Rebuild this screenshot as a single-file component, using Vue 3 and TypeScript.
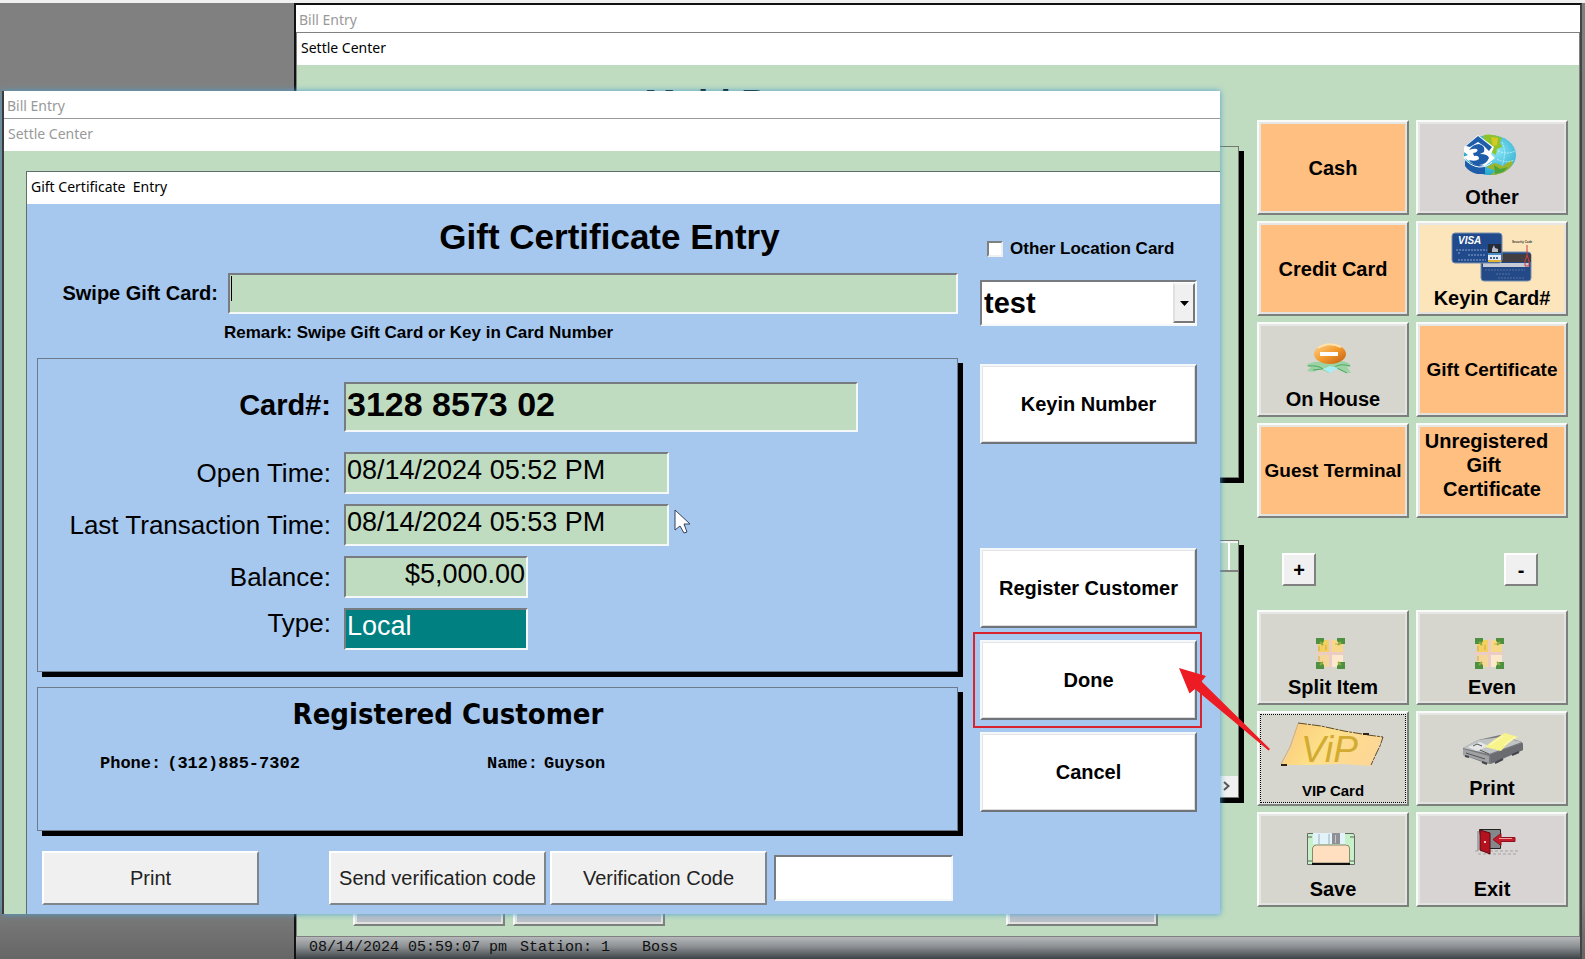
<script setup lang="ts">
import { ref } from 'vue'

interface PadButton {
  label: string
  icon?: string
  tone: string
  size?: string
}

interface CardField {
  id: string
  label: string
  value: string
  kind: string
}

const payButtons: PadButton[] = [
  { label: 'Cash', tone: 'orange' },
  { label: 'Other', icon: 'globe', tone: 'silver' },
  { label: 'Credit Card', tone: 'orange' },
  { label: 'Keyin Card#', icon: 'cards', tone: 'cream' },
  { label: 'On House', icon: 'house', tone: 'stone' },
  { label: 'Gift Certificate', tone: 'orange', size: 'medium' },
  { label: 'Guest Terminal', tone: 'orange', size: 'medium' },
  { label: 'Unregistered  \nGift   \nCertificate', tone: 'orange', size: 'multi' },
]

const actionButtons: PadButton[] = [
  { label: 'Split Item', icon: 'split', tone: 'stone' },
  { label: 'Even', icon: 'split', tone: 'stone' },
  { label: 'VIP Card', icon: 'vip', tone: 'stone', size: 'small' },
  { label: 'Print', icon: 'printer', tone: 'stone' },
  { label: 'Save', icon: 'floppy', tone: 'stone' },
  { label: 'Exit', icon: 'door', tone: 'silver' },
]

const fields: CardField[] = [
  { id: 'card-no', label: 'Card#:', value: '3128 8573 02', kind: 'number' },
  { id: 'open-time', label: 'Open Time:', value: '08/14/2024 05:52 PM', kind: 'time' },
  { id: 'last-time', label: 'Last Transaction Time:', value: '08/14/2024 05:53 PM', kind: 'time' },
  { id: 'balance', label: 'Balance:', value: '$5,000.00', kind: 'money' },
  { id: 'card-type', label: 'Type:', value: 'Local', kind: 'type' },
]

const entryTitle = 'Gift Certificate  Entry'
const swipe = ref('')
const otherLocation = ref(false)
const location = ref('test')
const verification = ref('')
</script>

<template>
  <div class="desktop">
    <section class="back">
      <div class="titlebar muted">Bill Entry</div>
      <div class="settle">
        <div class="titlebar tall">Settle Center</div>
        <div class="back-body">
          <div class="back-main">
            <h2>Multi Payment</h2>
            <div class="list list-one"></div>
            <div class="list list-two">
              <div class="list-head"><span></span></div>
              <div class="list-foot">
                <button type="button" aria-label="Scroll right">
                  <svg width="10" height="10" viewBox="0 0 10 10"><path d="M2 1l4.500 4L2 9" fill="none" stroke="#555" stroke-width="2" /></svg>
                </button>
              </div>
            </div>
            <div class="back-foot">
              <button type="button" class="pad silver" aria-label="Previous"></button>
              <button type="button" class="pad silver" aria-label="Next"></button>
              <button type="button" class="pad silver last" aria-label="More"></button>
            </div>
          </div>
          <div class="back-side">
            <div class="pad-grid">
              <button v-for="b in payButtons" :key="b.label" type="button" class="pad" :class="[b.tone, b.size, { iconic: b.icon }]">
                <svg v-if="b.icon === 'globe'" class="pad-icon" viewBox="0 0 148 61">
                  <defs>
                    <radialGradient id="sea" cx="0.6" cy="0.4" r="0.6">
                      <stop offset="0" stop-color="#8fe8f8" /><stop offset="1" stop-color="#25a8cc" />
                    </radialGradient>
                  </defs>
                  <ellipse cx="72" cy="33" rx="26" ry="20" fill="url(#sea)" />
                  <path d="M66 13q9-2 18 3l-2 4 2 5-5 2-1 6-5-3-2-8-6-6z" fill="#8fc32b" />
                  <path d="M73 15l7 1-1 7-4 1z" fill="#d5c928" />
                  <path d="M68 45l9-4 8 3 8-6 2 3c-4 8-12 12-23 12l6-4z" fill="#9cb52c" />
                  <path d="M76 43l6 4 8-2-5 5-8 2z" fill="#4ca53c" />
                  <path d="M84 20q5 10 0 24M80 29q9 4 17 0M79 37q8 5 17 1" fill="none" stroke="#b9f0fa" stroke-dasharray="2 1" />
                  <path d="M47 39l8 3 8-1 4-4v15l-8 0q-8-2-12-8z" fill="#1d5da9" />
                  <path d="M46 25L60 13 76 25 73 32 77 36 67 44 55 42 45 35 50 33 46 30z" fill="#fff" />
                  <path d="M48 24L60 14 74 25 71 29 66 24 60 20 52 25z" fill="#1d5da9" />
                  <path d="M51 28q4-6 10-6 7 2 5 8l-4 2q8 0 9 4-3 7-10 7-6 1-10-5 7 2 10-1 0-4-5-3l-1-3q6-1 4-4-3-1-8 1z" fill="#1d5da9" />
                  <path d="M46 36q6 8 15 9 9 0 13-5" fill="none" stroke="#fff" stroke-width="1" />
                </svg>
                <svg v-else-if="b.icon === 'cards'" class="pad-icon" viewBox="0 0 148 61">
                  <rect x="63" y="29" width="50" height="29" rx="3" fill="#234a86" stroke="#7890ae" />
                  <rect x="63" y="31" width="50" height="8" fill="#433e42" />
                  <rect x="65" y="40" width="46" height="4" fill="#c9cbd4" />
                  <path d="M67 47h40M78 51h14M80 55h26" stroke="#55709f" stroke-dasharray="2 1" />
                  <path d="M109 22v10l-2 6v5h4v-5l-2-6" fill="none" stroke="#c93d42" />
                  <rect x="34" y="10" width="50" height="30" rx="3" fill="#204a8b" stroke="#7890ae" />
                  <text x="40" y="21" class="visa">VISA</text>
                  <path d="M38 27h31M40 30h3M50 32h17M40 37h28" stroke="#8ba6cc" stroke-dasharray="2 1" />
                  <rect x="70" y="21" width="13" height="9" fill="#252b38" />
                  <path d="M74 29v-3l2-4 1 3 3 1v3z" fill="#b9bcc4" />
                  <rect x="70" y="30" width="13" height="9" fill="#e5eef8" />
                  <path d="M70 31h13" stroke="#4a90c4" stroke-width="2" /><path d="M70 38h13" stroke="#e2b437" stroke-width="2" />
                  <path d="M72 35h9" stroke="#446599" stroke-width="2" stroke-dasharray="2 1" />
                  <text x="94" y="20" class="code">Security Code</text>
                </svg>
                <svg v-else-if="b.icon === 'house'" class="pad-icon" viewBox="0 0 148 61">
                  <defs>
                    <linearGradient id="orb" x1="0" y1="0" x2="1" y2="1">
                      <stop offset="0" stop-color="#ffd48a" /><stop offset="0.500" stop-color="#f39a2e" /><stop offset="1" stop-color="#bd5c10" />
                    </linearGradient>
                  </defs>
                  <path d="M47 42q5-5 16-4l17-1q9 0 12 5l-4 1 4 6q-9 0-15-5l-7 5-9-4q-5 4-13 2l4-4z" fill="#9bd3a4" />
                  <path d="M49 42q10-1 15 3M91 42q-10-3-15 1M54 46l9-1M78 44l10 5" fill="none" stroke="#4fa863" />
                  <path d="M64 45l7-3 8 2-8 5z" fill="#a8edf4" />
                  <ellipse cx="71" cy="30" rx="16" ry="10" fill="url(#orb)" />
                  <path d="M59 24q11-7 23-1" fill="none" stroke="#ffe2ac" stroke-width="2" />
                  <rect x="61" y="28" width="18" height="4" fill="#fff" />
                </svg>
                <span>{{ b.label }}</span>
              </button>
            </div>
            <div class="steppers">
              <button type="button" class="mini">+</button>
              <button type="button" class="mini">-</button>
            </div>
            <div class="pad-grid">
              <button v-for="b in actionButtons" :key="b.label" type="button" class="pad iconic" :class="[b.tone, b.size]">
                <svg v-if="b.icon === 'split'" class="pad-icon" viewBox="0 0 148 61">
                  <rect x="59" y="28" width="11" height="12" fill="#f4cf62" /><rect x="73" y="28" width="11" height="12" fill="#f7d888" />
                  <rect x="59" y="43" width="11" height="12" fill="#f5d79c" /><rect x="73" y="43" width="11" height="12" fill="#fce9cb" />
                  <path d="M57 41.500h28M71.500 27v29" stroke="#f3c8c0" stroke-width="2" />
                  <path d="M60 34v5M67 33v5M60 44v5M76 32h6" stroke="#d2a747" />
                  <path d="M57 26h8v3l-2 3h-6zM78 26h8v6h-5l-3-3zM57 50h5l3 3v4h-8zM81 50h5v7h-8v-3z" fill="#4d9140" />
                  <path d="M61 30l3 3M82 30l-3 3M61 53l3-3M82 53l-3-3" stroke="#8fae3b" stroke-width="2" />
                </svg>
                <svg v-else-if="b.icon === 'vip'" class="pad-icon" viewBox="0 0 148 61">
                  <defs>
                    <linearGradient id="ticket" x1="0" y1="0" x2="1" y2="0.300">
                      <stop offset="0" stop-color="#fbc674" /><stop offset="0.500" stop-color="#fde08a" /><stop offset="1" stop-color="#fdd795" />
                    </linearGradient>
                  </defs>
                  <path d="M40 10l21 3 32 6 31 5-12 29-29-2-32 1-28 0 9-17z" fill="url(#ticket)" />
                  <path d="M39 10l23 3 23 5 24 4 15 2-3 9-3 6-6 13" fill="none" stroke="#5c4b2b" stroke-dasharray="9 1 3 1" />
                  <path d="M22 52h6M104 21h6" stroke="#2c2419" stroke-width="2" />
                  <path d="M39 11l-8 23-9 17" fill="none" stroke="#dcaa62" />
                  <text x="42" y="49" class="vip-text">ViP</text>
                </svg>
                <svg v-else-if="b.icon === 'printer'" class="pad-icon" viewBox="0 0 148 61">
                  <path d="M45 35l15-8 22-5 22 7 1 8-32 14-6-1-22-8z" fill="#777a7d" />
                  <path d="M45 35l15-8 23-3 21 5-33 12z" fill="#c1c4c5" />
                  <path d="M45 36l26 7v7l-26-8z" fill="#a0a2a5" />
                  <path d="M72 42l33-12v7l-32 13z" fill="#6a6c72" />
                  <path d="M50 34l12-5 9 4-12 5z" fill="#e6e6e6" />
                  <path d="M55 33l4-2 5 2M48 40l19 6M62 37l9 4" fill="none" stroke="#555" />
                  <path d="M47 43l4 1M64 49l5 2M77 50l8-4M94 42l7-3" stroke="#44464c" stroke-width="2" />
                  <path d="M67 34q12-10 20-14l13 4q-10 5-17 14z" fill="#f8f48c" />
                  <path d="M72 32l13-9M97 24l-11 8" stroke="#fffbc9" />
                </svg>
                <svg v-else-if="b.icon === 'floppy'" class="pad-icon" viewBox="0 0 148 61">
                  <path d="M48.500 19.500h46l1 2v29h-47z" fill="#c7f1c8" stroke="#626b63" />
                  <rect x="54" y="19" width="32" height="11" fill="#e2f4fa" />
                  <rect x="73" y="19" width="8" height="11" fill="#8f9196" /><path d="M76.500 21v8" stroke="#c5c7ca" />
                  <path d="M60 20v10M70 20v10" stroke="#9aaeb8" />
                  <path d="M53.500 49V34q1-3 4-3h29q4 0 4 3v15z" fill="#ffdfc0" stroke="#858a75" />
                  <path d="M53 50h38" stroke="#111" stroke-width="2" />
                  <path d="M49 23h4M91 23h4M49 47h4M91 47h4" stroke="#5a665c" />
                </svg>
                <svg v-else class="pad-icon" viewBox="0 0 148 61">
                  <path d="M57 37h44M60 40h38" stroke="#a5a1a1" stroke-dasharray="3 2" />
                  <path d="M61.500 15.500h21v19h-18z" fill="#85888b" stroke="#222" />
                  <path d="M60 17v20" stroke="#a6a6a8" stroke-width="2" />
                  <path d="M62 16l10 3v21l-10-4z" fill="#b51220" stroke="#5c0810" />
                  <circle cx="67" cy="28" r="1" fill="#fff" />
                  <path d="M75 25.500l8-6v4h14v4h-14v4z" fill="#c51c2c" stroke="#8f101c" />
                  <path d="M81 24.500h13" stroke="#f29a9f" />
                </svg>
                <span>{{ b.label }}</span>
              </button>
            </div>
          </div>
        </div>
      </div>
      <footer class="status"><span>08/14/2024 05:59:07 pm</span><span>Station: 1</span><span class="user">Boss</span></footer>
    </section>

    <section class="front">
      <div class="titlebar muted">Bill Entry</div>
      <div class="front-settle">
        <div class="titlebar tall muted">Settle Center</div>
        <div class="entry">
          <div class="titlebar tall">{{ entryTitle }}</div>
          <form class="form" @submit.prevent>
            <div class="form-left">
              <h1>Gift Certificate Entry</h1>
              <div class="swipe">
                <label for="swipe">Swipe Gift Card:</label>
                <div class="swipe-box">
                  <input id="swipe" v-model="swipe" class="sunken" type="text" />
                  <i class="caret"></i>
                </div>
              </div>
              <p class="remark">Remark: Swipe Gift Card or Key in Card Number</p>

              <div class="panel card-panel">
                <div v-for="f in fields" :key="f.id" class="field" :class="f.kind">
                  <label :for="f.id">{{ f.label }}</label>
                  <input :id="f.id" class="sunken" type="text" :value="f.value" readonly />
                  <svg v-if="f.id === 'last-time'" class="pointer" width="17" height="25" viewBox="0 0 17 25">
                    <path d="M1 1v20l5-4 4 7 3-1-3-8h6z" fill="#fff" stroke="#33415c" stroke-width="1" />
                  </svg>
                </div>
              </div>

              <div class="panel customer">
                <h3>Registered Customer</h3>
                <dl>
                  <div><dt>Phone:</dt><dd>(312)885-7302</dd></div>
                  <div><dt>Name:</dt><dd>Guyson</dd></div>
                </dl>
              </div>

              <div class="bottom">
                <button type="button" class="plain print">Print</button>
                <button type="button" class="plain">Send verification code</button>
                <button type="button" class="plain">Verification Code</button>
                <input v-model="verification" class="sunken code-box" type="text" aria-label="Verification code" />
              </div>
            </div>

            <div class="form-right">
              <label class="check"><input v-model="otherLocation" type="checkbox" />Other Location Card</label>
              <div class="combo">
                <select v-model="location" class="sunken" aria-label="Location">
                  <option>test</option>
                </select>
                <span class="drop"><svg width="9" height="5" viewBox="0 0 9 5"><path d="M0 0h9L4.500 5z" fill="#000" /></svg></span>
              </div>
              <button type="button" class="big keyin">Keyin Number</button>
              <button type="button" class="big">Register Customer</button>
              <div class="marked">
                <button type="button" class="big">Done</button>
                <svg class="arrow" width="94" height="86" viewBox="0 0 94 86">
                  <path d="M1 1L28 9 23.500 14.500 92 82 90.500 83.500 17 22 11.500 26.500z" fill="#ed1c24" />
                </svg>
              </div>
              <button type="button" class="big">Cancel</button>
            </div>
          </form>
        </div>
      </div>
    </section>
  </div>
</template>

<style>
html,
body {
  margin: 0;
  background: #808080;
}
</style>

<style scoped>
* {
  box-sizing: border-box;
}

.desktop {
  position: relative;
  min-height: 100vh;
  padding: 3px 3px 0 294px;
  background: linear-gradient(#f0f0f0 3px, transparent 3px), linear-gradient(#808080 0, #808080 900px, #666 959px);
  font-family: "Liberation Sans", Arial, sans-serif;
  color: #000;
}

button,
input,
select {
  font-family: inherit;
  color: inherit;
  margin: 0;
}

h1,
h2,
h3,
p,
dl,
dd {
  margin: 0;
}

.titlebar {
  display: flex;
  align-items: center;
  height: 27px;
  padding: 2px 4px 0 3px;
  background: #fff;
  font-family: "Noto Sans", "Open Sans", sans-serif;
  font-size: 14px;
  line-height: 20px;
  white-space: pre;
}

.titlebar.tall {
  height: 32px;
  padding: 0 4px 2px;
}

.titlebar.muted {
  color: #999;
}

/* settle window at the back */
.back {
  display: flex;
  flex-direction: column;
  min-height: calc(100vh - 3px);
  border: 2px solid #111;
  border-right-color: #444;
  border-bottom: 0;
  background: #fff;
}

.settle {
  flex: 1;
  display: flex;
  flex-direction: column;
  border: 1px solid #808080;
}

.back-body {
  flex: 1;
  display: flex;
  padding-right: 11px;
  background: #c0dcc0;
}

.back-main {
  flex: 1;
}

h2 {
  margin: 19px 0 22px;
  padding-left: 4px;
  font-size: 37px;
  line-height: 40px;
  text-align: center;
}

.list {
  margin-left: 10px;
  border: 1px solid #707870;
  box-shadow: 5px 5px 0 #000;
}

.list-one {
  height: 332px;
  margin-bottom: 62px;
}

.list-two {
  display: flex;
  flex-direction: column;
  justify-content: space-between;
  height: 258px;
}

.list-head {
  height: 31px;
  padding-right: 8px;
  border-top: 2px solid #f4f4f4;
  border-bottom: 2px solid #808080;
}

.list-head span {
  display: block;
  height: 100%;
  border-right: 2px solid #fff;
}

.list-foot {
  background: #f0f0f0;
}

.list-foot button {
  display: block;
  margin-left: auto;
  width: 22px;
  height: 21px;
  padding: 0;
  border: 0;
  background: #f0f0f0;
}

.back-foot {
  display: flex;
  gap: 8px;
  margin-top: 33px;
  padding: 0 81px 0 56px;
}

.back-foot .pad {
  width: 152px;
  background: #bcc0c8;
}

.back-foot .last {
  margin-left: auto;
}

.back-side {
  width: 311px;
  margin-left: 18px;
  padding-top: 55px;
}

.pad-grid {
  display: grid;
  grid-template-columns: 1fr 1fr;
  gap: 6px 7px;
}

.pad {
  display: flex;
  flex-direction: column;
  align-items: center;
  justify-content: center;
  height: 95px;
  padding: 0;
  border: 2px solid;
  border-color: #f8fbf8 #7c807c #7c807c #f8fbf8;
  box-shadow: inset 2px 2px 0 #e6e6e4, inset -2px -2px 0 #e2e2e0;
  font-size: 20px;
  font-weight: bold;
  line-height: 24px;
  white-space: pre;
}

.iconic {
  justify-content: flex-end;
  padding-bottom: 4px;
}

.orange { background: #ffbf80; }
.silver { background: #d8d4d3; }
.cream { background: #fde5bb; }
.stone { background: #d6d6cf; }

.medium { font-size: 19px; }

.multi { padding-bottom: 12px; }

.small {
  position: relative;
  padding-bottom: 3px;
  font-size: 15px;
}

.small::after {
  content: "";
  position: absolute;
  inset: 1px;
  border: 1px dotted #000;
}

.small span {
  line-height: 20px;
}

.small .pad-icon {
  margin-bottom: 7px;
}

.pad-icon {
  width: 148px;
  height: 61px;
  flex: none;
  margin-bottom: 2px;
}

.visa {
  font: italic bold 10px "Liberation Sans", sans-serif;
  fill: #fff;
}

.code {
  font: bold 3px "Liberation Sans", sans-serif;
  fill: #333;
}

.vip-text {
  font: italic 37px "Liberation Sans", sans-serif;
  fill: #d2ab30;
}

.steppers {
  display: flex;
  justify-content: space-between;
  padding: 35px 30px 24px 25px;
}

.mini {
  width: 34px;
  height: 33px;
  padding: 0;
  border: 2px solid;
  border-color: #fff #808080 #808080 #fff;
  background: #f0f0f0;
  font-size: 20px;
  font-weight: bold;
  line-height: 24px;
}

.status {
  display: flex;
  align-items: center;
  gap: 18px;
  height: 22px;
  padding: 0 15px 0 13px;
  background: linear-gradient(#b4b8ba, #8b8f92 45%, #3b4146);
  font-family: "Liberation Mono", monospace;
  font-size: 15px;
  line-height: 20px;
  color: #101010;
  white-space: nowrap;
}

.status span + span {
  margin-left: -5px;
}

.status .user {
  margin-left: 14px;
}

/* gift certificate window in front */
.front {
  position: absolute;
  top: 91px;
  left: 2px;
  right: 365px;
  border-left: 2px solid #3c3c3c;
  background: #fff;
  box-shadow: 0 0 6px #4c9fce;
}

.front-settle {
  border-top: 1px solid #999;
  background: #c0dcc0;
}

.entry {
  margin: 20px 0 0 22px;
  border: 1px solid #5e6e68;
  border-width: 1px 0 0 1px;
}

.form {
  display: flex;
  gap: 22px;
  padding: 0 23px 9px 10px;
  background: #a6c8ee;
}

.form-left {
  flex: 1;
  min-width: 0;
}

h1 {
  margin: 13px 0 16px;
  padding-left: 224px;
  font-size: 35px;
  line-height: 40px;
  text-align: center;
}

.sunken {
  border: 2px solid;
  border-color: #787c80 #f4f8f8 #f4f8f8 #787c80;
  border-radius: 0;
  background: #c0dcc0;
  outline: 0;
}

.swipe {
  display: flex;
  align-items: center;
}

.swipe label {
  width: 191px;
  padding-right: 10px;
  font-size: 20px;
  font-weight: bold;
  text-align: right;
}

.swipe-box {
  position: relative;
  flex: 1;
}

.swipe-box input {
  display: block;
  width: 100%;
  height: 41px;
  font-size: 27px;
}

.caret {
  position: absolute;
  top: 3px;
  left: 3px;
  width: 1px;
  height: 25px;
  background: #000;
}

.remark {
  margin: 9px 0 15px;
  padding-left: 187px;
  font-size: 17px;
  font-weight: bold;
  line-height: 20px;
}

.panel {
  border: 1px solid #6c7a8c;
  box-shadow: 5px 5px 0 #000;
}

.card-panel {
  display: flex;
  flex-direction: column;
  gap: 10px;
  padding: 23px 0 21px;
}

.field {
  display: flex;
  align-items: center;
  gap: 13px;
}

.field label {
  width: 293px;
  font-size: 26px;
  line-height: 30px;
  text-align: right;
}

.field input {
  width: 325px;
  height: 42px;
  padding: 0 1px 6px;
  font-size: 27px;
}

.number {
  align-items: flex-start;
  margin-bottom: 10px;
}

.number label {
  font-size: 29px;
  font-weight: bold;
  line-height: 46px;
}

.number input {
  width: 514px;
  height: 50px;
  font-size: 34px;
  font-weight: bold;
}

.money input {
  width: 184px;
  text-align: right;
}

.type {
  align-items: flex-start;
}

.type input {
  width: 184px;
  background: #008080;
  color: #fff;
}

.pointer {
  margin: 0 0 8px -8px;
}

.customer {
  height: 144px;
  margin-top: 15px;
  padding: 8px 0 0 62px;
}

h3 {
  padding-right: 161px;
  font-family: "DejaVu Sans Condensed", "DejaVu Sans", sans-serif;
  font-size: 29px;
  line-height: 36px;
  text-align: center;
}

dl {
  display: grid;
  grid-template-columns: 387px 1fr;
  margin-top: 22px;
  font-family: "Liberation Mono", monospace;
  font-size: 17px;
  font-weight: bold;
  line-height: 20px;
}

dl div {
  display: flex;
  gap: 6px;
}

.bottom {
  display: flex;
  align-items: center;
  gap: 4px;
  margin-top: 20px;
  padding: 0 5px;
}

.plain {
  width: 217px;
  height: 54px;
  padding: 0;
  border: 2px solid;
  border-color: #fff #80848c #80848c #fff;
  background: #f0f0f0;
  font-size: 20px;
  color: #222;
  white-space: nowrap;
}

.print {
  margin-right: 66px;
}

.code-box {
  flex: 1;
  min-width: 0;
  height: 46px;
  margin-left: 3px;
  background: #fff;
  font-size: 20px;
}

.form-right {
  flex: none;
  display: flex;
  flex-direction: column;
  gap: 12px;
  width: 217px;
  padding-top: 37px;
}

.check {
  display: flex;
  align-items: center;
  gap: 7px;
  height: 16px;
  padding-left: 7px;
  font-size: 17px;
  font-weight: bold;
  line-height: 16px;
  white-space: nowrap;
}

.check input {
  appearance: none;
  width: 16px;
  height: 16px;
  border: 2px solid;
  border-color: #808080 #f0f0f0 #f0f0f0 #808080;
  background: #fff;
}

.check input:checked {
  background: #333;
}

.combo {
  position: relative;
  margin: 11px 0 26px;
}

.combo select {
  appearance: none;
  display: block;
  width: 100%;
  height: 46px;
  padding: 0 0 0 2px;
  background: #fff;
  font-size: 29px;
  font-weight: bold;
}

.drop {
  position: absolute;
  top: 3px;
  right: 2px;
  bottom: 3px;
  display: flex;
  align-items: center;
  justify-content: center;
  width: 22px;
  border: 2px solid;
  border-color: #f4f4f4 #777 #777 #e0e0e0;
  background: #f0f0f0;
  pointer-events: none;
}

.big {
  display: block;
  width: 100%;
  height: 80px;
  padding: 0;
  border: 2px solid;
  border-color: #f4f8fa #707478 #707478 #f4f8fa;
  background: #fff;
  box-shadow: inset 1px 1px 0 #e4e4e4, inset -1px -1px 0 #ddd;
  font-size: 20px;
  font-weight: bold;
  white-space: nowrap;
}

.keyin {
  margin-bottom: 92px;
}

.marked {
  position: relative;
}

.marked::after {
  content: "";
  position: absolute;
  inset: -8px -5px -8px -7px;
  border: 2px solid #d8242f;
  pointer-events: none;
}

.arrow {
  position: absolute;
  z-index: 1;
  top: 27px;
  left: 198px;
  pointer-events: none;
}
</style>
